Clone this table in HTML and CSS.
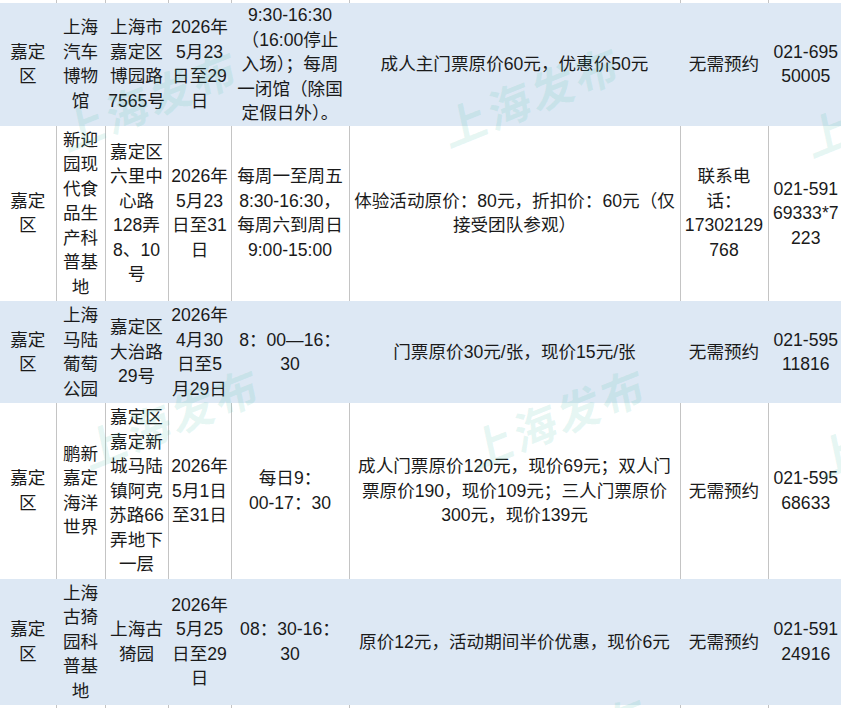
FILE: index.html
```html
<!DOCTYPE html>
<html lang="zh-CN">
<head>
<meta charset="utf-8">
<title>嘉定区活动场馆</title>
<link rel="stylesheet" href="styles.css">
</head>
<body>
<div class="sheet">
  <table class="grid">
    <colgroup>
      <col class="c-dist"><col class="c-name"><col class="c-addr"><col class="c-date"><col class="c-time"><col class="c-price"><col class="c-book"><col class="c-tel">
    </colgroup>
    <tbody>
      <tr class="edge"><td></td><td></td><td></td><td></td><td></td><td></td><td></td><td></td></tr>
      <tr class="tint first">
        <td>嘉定<br>区</td>
        <td>上海<br>汽车<br>博物<br>馆</td>
        <td>上海市<br>嘉定区<br>博园路<br>7565号</td>
        <td>2026年<br>5月23<br>日至29<br>日</td>
        <td>9:30-16:30<br>（16:00停止<br>入场）；每周<br>一闭馆（除国<br>定假日外）。</td>
        <td>成人主门票原价60元，优惠价50元</td>
        <td>无需预约</td>
        <td>021-695<br>50005</td>
      </tr>
      <tr>
        <td>嘉定<br>区</td>
        <td>新迎<br>园现<br>代食<br>品生<br>产科<br>普基<br>地</td>
        <td>嘉定区<br>六里中<br>心路<br>128弄<br>8、10<br>号</td>
        <td>2026年<br>5月23<br>日至31<br>日</td>
        <td>每周一至周五<br>8:30-16:30，<br>每周六到周日<br>9:00-15:00</td>
        <td>体验活动原价：80元，折扣价：60元（仅<br>接受团队参观）</td>
        <td>联系电<br>话：<br>17302129<br>768</td>
        <td>021-591<br>69333*7<br>223</td>
      </tr>
      <tr class="tint">
        <td>嘉定<br>区</td>
        <td>上海<br>马陆<br>葡萄<br>公园</td>
        <td>嘉定区<br>大治路<br>29号</td>
        <td>2026年<br>4月30<br>日至5<br>月29日</td>
        <td>8：00—16：<br>30</td>
        <td>门票原价30元/张，现价15元/张</td>
        <td>无需预约</td>
        <td>021-595<br>11816</td>
      </tr>
      <tr>
        <td>嘉定<br>区</td>
        <td>鹏新<br>嘉定<br>海洋<br>世界</td>
        <td>嘉定区<br>嘉定新<br>城马陆<br>镇阿克<br>苏路66<br>弄地下<br>一层</td>
        <td>2026年<br>5月1日<br>至31日</td>
        <td>每日9：<br>00-17：30</td>
        <td>成人门票原价120元，现价69元；双人门<br>票原价190，现价109元；三人门票原价<br>300元，现价139元</td>
        <td>无需预约</td>
        <td>021-595<br>68633</td>
      </tr>
      <tr class="tint">
        <td>嘉定<br>区</td>
        <td>上海<br>古猗<br>园科<br>普基<br>地</td>
        <td>上海古<br>猗园</td>
        <td>2026年<br>5月25<br>日至29<br>日</td>
        <td>08：30-16：<br>30</td>
        <td>原价12元，活动期间半价优惠，现价6元</td>
        <td>无需预约</td>
        <td>021-591<br>24916</td>
      </tr>
      <tr class="edge tail"><td></td><td></td><td></td><td></td><td></td><td></td><td></td><td></td></tr>
    </tbody>
  </table>
  <div class="marks" aria-hidden="true">
    <span class="mark m1">上海发布</span>
    <span class="mark m2">上海发布</span>
    <span class="mark m3">上海发布</span>
    <span class="mark m4">上海发布</span>
    <span class="mark m5">上海发布</span>
    <span class="mark m6">上海发布</span>
    <span class="mark m7">上海发布</span>
  </div>
</div>
</body>
</html>
```

FILE: styles.css
```css
html, body {
  margin: 0;
  padding: 0;
  background: #ffffff;
}

body {
  font-family: "Liberation Sans", "Noto Sans CJK SC", sans-serif;
  font-size: 17.6px;
  line-height: 24.5px;
  color: #1a1a1a;
  overflow: hidden;
}

.sheet {
  position: relative;
  width: 841px;
  height: 708px;
  overflow: hidden;
}

.grid {
  border-collapse: collapse;
  table-layout: fixed;
  width: 843px;
}

.c-dist { width: 56px; }
.c-name { width: 49px; }
.c-addr { width: 63px; }
.c-date { width: 63px; }
.c-time { width: 118px; }
.c-price { width: 331px; }
.c-book { width: 88px; }
.c-tel { width: 75px; }

.grid td {
  padding: 2px 2px;
  text-align: center;
  vertical-align: middle;
  white-space: nowrap;
  border-left: 1px solid #c4c4c4;
  border-right: 1px solid #c4c4c4;
  border-top: 0;
  border-bottom: 0;
}

.grid td:first-child { border-left: 0; }
.grid td:last-child { border-right: 0; }

.grid tr.tint td {
  background: #dde8f4;
  border-color: #dde8f4;
}

.grid tr.first td {
  padding-top: 0;
  padding-bottom: 0;
}

.grid tr.edge td {
  padding: 0;
  height: 3px;
  font-size: 0;
  line-height: 0;
}

.grid tr.tail td {
  height: 20px;
}

.marks {
  position: absolute;
  inset: 0;
  pointer-events: none;
  overflow: hidden;
}

.mark {
  position: absolute;
  font-family: "Noto Sans CJK SC", sans-serif;
  font-size: 44px;
  font-weight: 700;
  line-height: 1;
  letter-spacing: 3px;
  white-space: nowrap;
  color: rgba(60, 185, 160, 0.13);
  transform: translate(-50%, -50%) rotate(-22deg) skewX(-10deg);
}

.m1 { left: 532px; top: 94px; }
.m2 { left: 150px; top: 98px; }
.m3 { left: 895px; top: 104px; }
.m4 { left: 172px; top: 416px; }
.m5 { left: 558px; top: 416px; }
.m6 { left: 905px; top: 425px; }
.m7 { left: 560px; top: 745px; }
```
